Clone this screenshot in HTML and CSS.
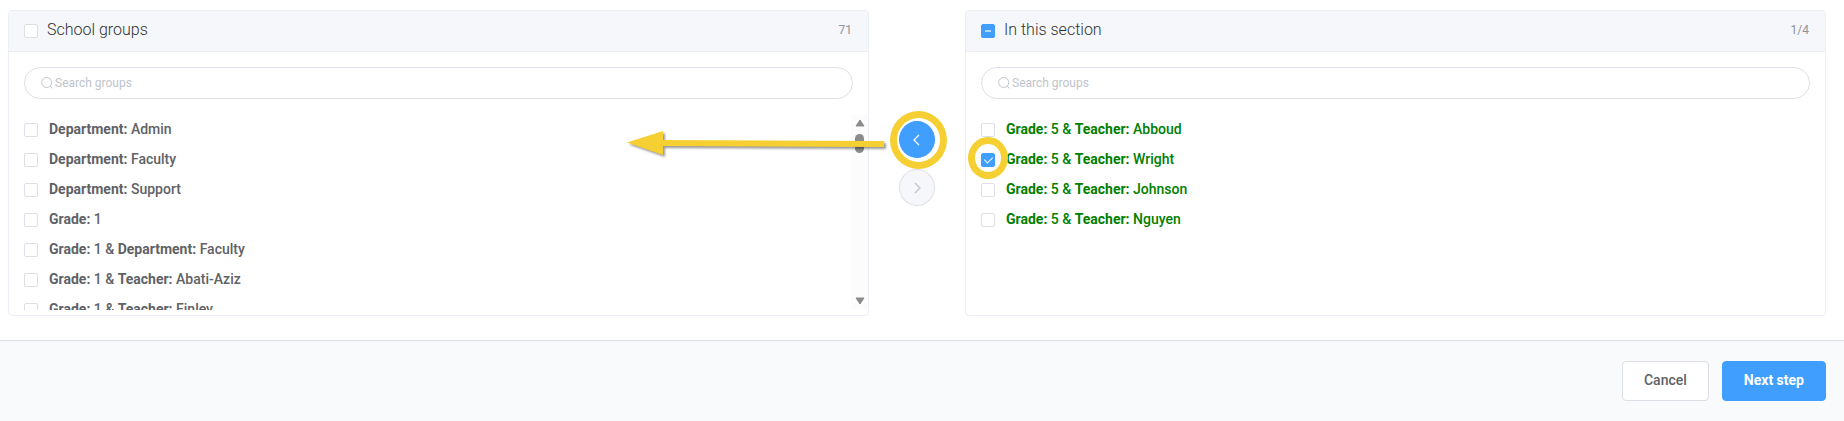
FILE: index.html
```
<!DOCTYPE html>
<html lang="en">
<head>
  <meta charset="UTF-8">
  <meta name="viewport" content="width=device-width, initial-scale=1.0">
  <title>Section groups</title>
  <link rel="stylesheet" href="styles.css">
</head>
<body>
  <main class="transfer">
    <section class="panel">
      <header class="panel-header">
        <label class="panel-title"><input type="checkbox"> School groups</label>
        <span class="count">71</span>
      </header>
      <div class="search">
        <svg class="search-icon" viewBox="0 0 12 12"><circle cx="5.7" cy="5.5" r="5"/><path d="M9.3 9.2L11.5 11.5"/></svg>
        <input type="text" placeholder="Search groups" aria-label="Search school groups">
      </div>
      <div class="list-wrap">
        <ul class="list">
          <li><label><input type="checkbox"> <span><b>Department:</b> Admin</span></label></li>
          <li><label><input type="checkbox"> <span><b>Department:</b> Faculty</span></label></li>
          <li><label><input type="checkbox"> <span><b>Department:</b> Support</span></label></li>
          <li><label><input type="checkbox"> <span><b>Grade:</b> 1</span></label></li>
          <li><label><input type="checkbox"> <span><b>Grade:</b> 1 &amp; <b>Department:</b> Faculty</span></label></li>
          <li><label><input type="checkbox"> <span><b>Grade:</b> 1 &amp; <b>Teacher:</b> Abati-Aziz</span></label></li>
          <li><label><input type="checkbox"> <span><b>Grade:</b> 1 &amp; <b>Teacher:</b> Finley</span></label></li>
        </ul>
        <div class="scrollbar">
          <svg class="scroll-arrow" viewBox="0 0 10 8"><path d="M5 1L9 7H1Z"/></svg>
          <span class="thumb"></span>
          <svg class="scroll-arrow down" viewBox="0 0 10 8"><path d="M1 1H9L5 7Z"/></svg>
        </div>
      </div>
    </section>

    <div class="moves">
      <button class="move primary highlight" aria-label="Move to school groups">
        <svg class="chevron" viewBox="0 0 12 12"><path d="M8 1L3 6L8 11"/></svg>
        <svg class="pointer" viewBox="0 0 262 32">
          <path d="M1 14.5L37 3V12L258 13V19L37 18V27Z"/>
        </svg>
      </button>
      <button class="move" aria-label="Move to this section" disabled>
        <svg class="chevron" viewBox="0 0 12 12"><path d="M4 1L9 6L4 11"/></svg>
      </button>
    </div>

    <section class="panel">
      <header class="panel-header">
        <label class="panel-title"><input type="checkbox" class="partial"> In this section</label>
        <span class="count">1/4</span>
      </header>
      <div class="search">
        <svg class="search-icon" viewBox="0 0 12 12"><circle cx="5.7" cy="5.5" r="5"/><path d="M9.3 9.2L11.5 11.5"/></svg>
        <input type="text" placeholder="Search groups" aria-label="Search groups in this section">
      </div>
      <div class="list-wrap">
        <ul class="list assigned">
          <li><label><input type="checkbox"> <span><b>Grade:</b> 5 &amp; <b>Teacher:</b> Abboud</span></label></li>
          <li class="marked"><label><input type="checkbox" checked> <span><b>Grade:</b> 5 &amp; <b>Teacher:</b> Wright</span></label></li>
          <li><label><input type="checkbox"> <span><b>Grade:</b> 5 &amp; <b>Teacher:</b> Johnson</span></label></li>
          <li><label><input type="checkbox"> <span><b>Grade:</b> 5 &amp; <b>Teacher:</b> Nguyen</span></label></li>
        </ul>
      </div>
    </section>
  </main>

  <footer class="footer">
    <button class="btn">Cancel</button>
    <button class="btn btn-primary">Next step</button>
  </footer>
</body>
</html>
```
FILE: styles.css
```
* {
  box-sizing: border-box;
}
body {
  display: flex;
  flex-direction: column;
  min-height: 100vh;
  margin: 0;
  font-family: Roboto, sans-serif;
  font-size: 14px;
  color: #606266;
  background-color: #fff;
}
button, input {
  font-family: inherit;
}
.transfer {
  display: grid;
  grid-template-columns: 1fr 96px 1fr;
  padding: 10px 18px 24px 8px;
}
.panel {
  border: 1px solid #ebeef5;
  border-radius: 4px;
  overflow: hidden;
  padding-bottom: 5px;
}
.panel-header {
  display: flex;
  align-items: center;
  justify-content: space-between;
  height: 41px;
  padding: 0 16px 3px 15px;
  background-color: #f5f7fa;
  border-bottom: 1px solid #ebeef5;
}
.panel-title {
  display: flex;
  align-items: center;
  gap: 9px;
  font-size: 16px;
  font-weight: 300;
  color: #303133;
}
.count {
  font-size: 12px;
  color: #909399;
}
input[type="checkbox"] {
  appearance: none;
  display: grid;
  place-items: center;
  flex: none;
  width: 14px;
  height: 14px;
  margin: 2px 0 0;
  border: 1px solid #dcdfe6;
  border-radius: 2px;
  background-color: #fff;
}
input[type="checkbox"]:checked, input.partial {
  background-color: #409eff;
  border-color: #409eff;
}
input[type="checkbox"]:checked::after {
  content: "";
  width: 4px;
  height: 7px;
  margin-bottom: 3px;
  border: solid #fff;
  border-width: 0 1px 1px 0;
  transform: rotate(45deg);
}
input.partial::after {
  content: "";
  width: 6px;
  height: 2px;
  background-color: #b3d8ff;
}
.search {
  display: flex;
  align-items: center;
  gap: 2px;
  height: 32px;
  margin: 15px 15px 0;
  padding: 0 16px;
  border: 1px solid #dcdfe6;
  border-radius: 16px;
}
.search-icon {
  width: 12px;
  height: 12px;
  fill: none;
  stroke: #c0c4cc;
}
.search input {
  flex: 1;
  min-width: 0;
  padding: 0;
  border: none;
  outline: none;
  font-size: 12px;
  color: #606266;
  background: none;
}
.search input::placeholder {
  color: #c0c4cc;
}
.list-wrap {
  display: flex;
  height: 196px;
  margin-top: 15px;
}
.list {
  flex: 1;
  margin: 0;
  padding: 0 0 0 15px;
  list-style: none;
  overflow: hidden;
}
.list li {
  height: 30px;
}
.list label {
  display: inline-flex;
  align-items: center;
  gap: 11px;
  height: 30px;
  font-weight: 500;
}
.list b {
  font-weight: 700;
}
.list.assigned {
  color: #008000;
  overflow: visible;
}
.scrollbar {
  display: flex;
  flex-direction: column;
  align-items: center;
  width: 17px;
  padding: 5px 0;
  background-color: #fcfcfc;
}
.scroll-arrow {
  width: 10px;
  height: 8px;
  fill: #8b8b8b;
  stroke: #8b8b8b;
  stroke-linejoin: round;
}
.scroll-arrow.down {
  margin-top: auto;
}
.thumb {
  width: 9px;
  height: 19px;
  margin-top: 7px;
  border-radius: 5px;
  background-color: #8b8b8b;
}
.moves {
  display: flex;
  flex-direction: column;
  align-items: center;
  gap: 11px;
  padding-top: 111px;
}
.move {
  position: relative;
  display: grid;
  place-items: center;
  width: 36px;
  height: 37px;
  padding: 0;
  border: 1px solid #dcdfe6;
  border-radius: 50%;
  color: #c0c4cc;
  background-color: #f5f7fa;
}
.move.primary {
  color: #fff;
  border-color: #409eff;
  background-color: #409eff;
}
.chevron {
  width: 12px;
  height: 12px;
  fill: none;
  stroke: currentColor;
  stroke-width: 1.3;
}
/* yellow callouts */
.highlight::after {
  content: "";
  position: absolute;
  inset: -11px -13px -12px -10px;
  border: 7px solid #f6cf33;
  border-radius: 50%;
}
.pointer {
  position: absolute;
  right: 46px;
  top: 6px;
  width: 262px;
  height: 32px;
  fill: #f6cf33;
  filter: drop-shadow(2px 2px 1px rgba(0, 0, 0, 0.4));
}
.marked input {
  position: relative;
}
.marked input::before {
  content: "";
  position: absolute;
  inset: -17px -14px -13px -14px;
  border: 7px solid #f6cf33;
  border-radius: 50%;
}
.footer {
  display: flex;
  flex: 1;
  align-items: flex-start;
  justify-content: flex-end;
  gap: 13px;
  padding: 20px 18px;
  border-top: 1px solid #dcdfe6;
  background-color: #f9fafc;
}
.btn {
  height: 40px;
  padding: 0 21px 2px;
  border: 1px solid #dcdfe6;
  border-radius: 4px;
  font-size: 14px;
  font-weight: 500;
  color: #606266;
  background-color: #fff;
}
.btn-primary {
  font-weight: 700;
  color: #fff;
  border-color: #409eff;
  background-color: #409eff;
}
```
